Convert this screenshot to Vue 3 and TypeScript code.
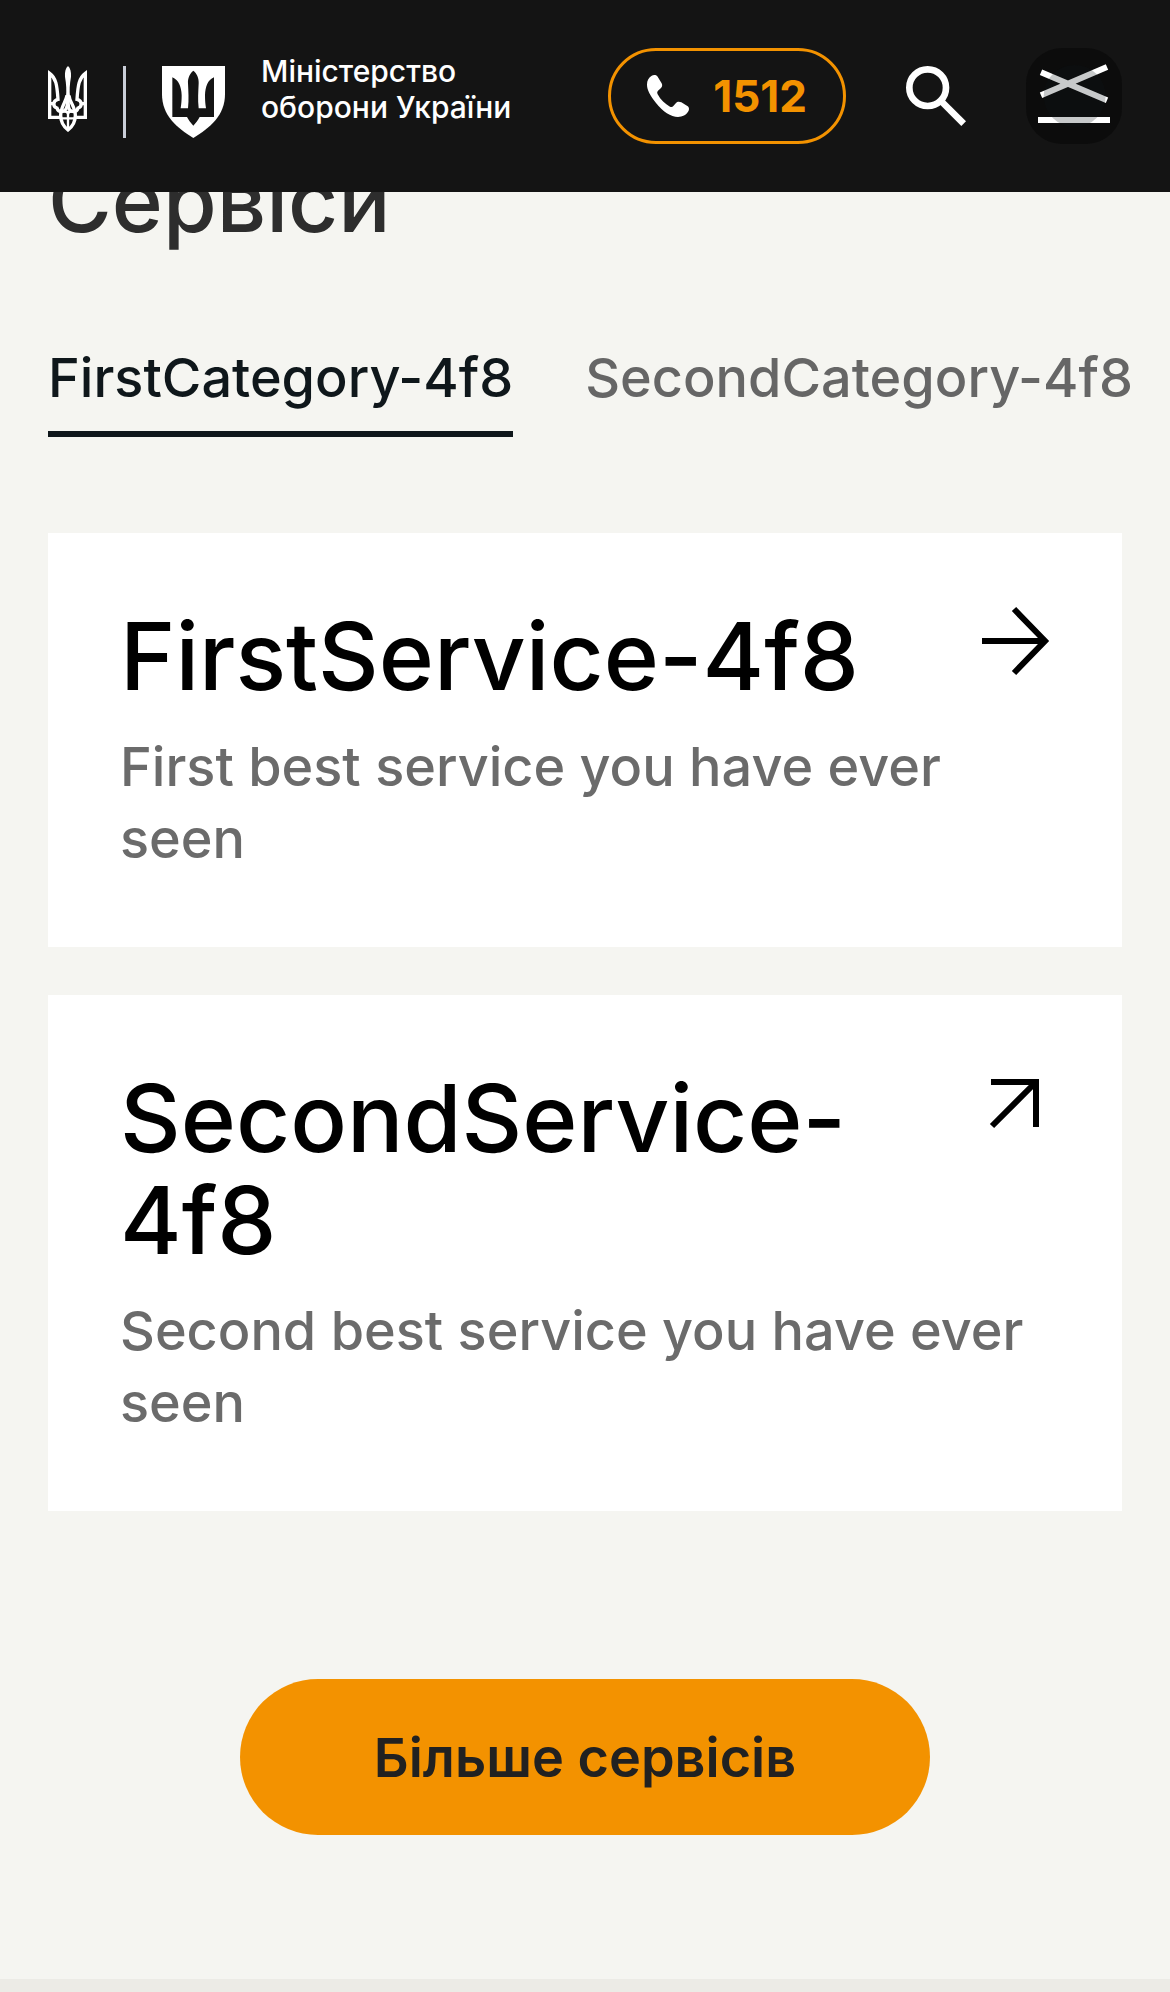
<script setup lang="ts">
import { ref } from 'vue'

interface Category {
  id: string
  name: string
}

interface Service {
  name: string
  description: string
  external: boolean
}

const categories: Category[] = [
  { id: 'first', name: 'FirstCategory-4f8' },
  { id: 'second', name: 'SecondCategory-4f8' },
]

const services: Service[] = [
  { name: 'FirstService-4f8', description: 'First best service you have ever seen', external: false },
  { name: 'SecondService-4f8', description: 'Second best service you have ever seen', external: true },
]

const active = ref<string>('first')
</script>

<template>
  <div class="page">
    <header class="header">
      <a class="brand" href="#">
        <svg class="trident" viewBox="0 0 117 198" fill="none" stroke="#fff" stroke-width="10" aria-hidden="true">
          <path d="M60 0C53 6 50 18 51 32C55 55 56 72 54 92H66C64 72 65 55 69 32C70 18 67 6 60 0Z" fill="#fff" stroke="none" />
          <path d="M38 154H5V22C24 36 27 56 30 100C14 103 14 122 27 126C30 138 40 138 50 134C58 128 60 112 60 88" />
          <path d="M79 154H112V22C93 36 90 56 87 100C103 103 103 122 90 126C87 138 77 138 67 134C59 128 60 112 60 88" />
          <path d="M4 113H18M113 113H99M57 88C54 108 38 122 38 148C38 172 48 183 60 192C72 183 82 172 82 148C82 122 64 108 63 88" />
          <path d="M60 134V190M38 157H82M46 136C54 136 60 140 60 146C60 140 66 136 74 136" stroke-width="7" />
        </svg>
        <span class="divider"></span>
        <svg class="shield" viewBox="0 0 189 216" aria-hidden="true">
          <path d="M0 0H189V85C189 148 144 186 94 216C44 186 0 148 0 85Z" fill="#fff" />
          <path d="M31 34C50 42 58 62 59 88C59 102 58 114 56 127H78C81 100 79 76 78 52C77 36 84 22 94 14C104 22 111 36 110 52C109 76 107 100 110 127H132C130 114 129 102 129 88C130 62 137 42 156 34V153H113C108 162 102 171 94 179C86 171 80 162 75 153H31Z" fill="#141414" />
        </svg>
        <span class="brand-name">Міністерство<br />оборони України</span>
      </a>
      <div class="actions">
        <a class="phone" href="tel:1512">
          <svg class="phone-icon" viewBox="0 0 126 126" aria-hidden="true">
            <path d="M13 3C19-1 27-1 31 4L43 23C47 29 46 35 42 39L33 47C30 50 30 54 32 58C41 75 54 87 69 95C73 97 77 96 79 93L87 84C91 79 97 79 103 82L121 93C127 97 127 103 124 109C118 120 106 126 93 126C72 126 47 110 27 84C9 61 0 44 0 29C0 17 5 8 13 3Z" fill="#fff" />
          </svg>
          <span>1512</span>
        </a>
        <button class="search" type="button" aria-label="Пошук">
          <svg viewBox="0 0 180 180" fill="none" stroke="#fff" aria-hidden="true">
            <circle cx="65" cy="65" r="55" stroke-width="20" />
            <path d="M105 105L173 173" stroke-width="20" />
          </svg>
        </button>
        <button class="menu" type="button" aria-label="Меню">
          <svg viewBox="0 0 288 288" aria-hidden="true">
            <path d="M45 73L243 157M45 142L243 57M36 216H252" fill="none" stroke="#fff" stroke-width="18" />
            <circle cx="146" cy="144" r="93" fill="#0f1419" fill-opacity="0.23" />
          </svg>
        </button>
      </div>
    </header>

    <main class="services">
      <h2 class="heading">Сервіси</h2>
      <nav class="tabs" aria-label="Категорії">
        <button
          v-for="category in categories"
          :key="category.id"
          type="button"
          class="tab"
          :class="{ 'tab-active': category.id === active }"
          @click="active = category.id"
        >
          {{ category.name }}
        </button>
      </nav>
      <div class="cards">
        <a v-for="service in services" :key="service.name" class="card" href="#">
          <div class="card-top">
            <h3 class="card-title">{{ service.name }}</h3>
            <svg class="arrow" viewBox="0 0 72 72" fill="none" stroke="#000" stroke-width="6" aria-hidden="true">
              <path v-if="service.external" d="M13 15H58V60M57 16L14 59" />
              <path v-else d="M4 36H66M36 4L67 36L36 68" />
            </svg>
          </div>
          <p class="card-text">{{ service.description }}</p>
        </a>
      </div>
      <button class="more" type="button">Більше сервісів</button>
    </main>
    <footer class="footer"></footer>
  </div>
</template>

<style>
body {
  background: #f5f5f1;
}
</style>

<style scoped>
.page {
  display: flex;
  flex-direction: column;
  min-height: 100vh;
  font-family: Inter, 'Noto Sans', sans-serif;
  background: #f5f5f1;
}

button {
  padding: 0;
  border: 0;
  background: none;
  font-family: inherit;
  cursor: pointer;
}

a {
  color: inherit;
  text-decoration: none;
}

svg {
  display: block;
  flex: none;
}

.header {
  position: sticky;
  top: 0;
  z-index: 1;
  display: flex;
  align-items: center;
  justify-content: space-between;
  box-sizing: border-box;
  height: 192px;
  padding: 0 48px;
  background: #141414;
}

.brand {
  display: flex;
  align-items: flex-start;
  gap: 36px;
  height: 72px;
  margin-top: 12px;
  color: #fff;
}

.trident {
  width: 39px;
  height: 66px;
}

.divider {
  width: 3px;
  height: 72px;
  background: #c9ced8;
}

.shield {
  width: 63px;
  height: 72px;
}

.brand-name {
  margin-top: -13px;
  font-size: 30px;
  font-weight: 500;
  line-height: 36px;
  white-space: nowrap;
}

.actions {
  display: flex;
  align-items: center;
  gap: 60px;
}

.phone {
  display: flex;
  align-items: center;
  gap: 24px;
  box-sizing: border-box;
  height: 96px;
  padding: 0 36px;
  border: 3px solid #f39200;
  border-radius: 48px;
  color: #f39200;
  font-size: 44px;
  font-weight: 700;
}

.phone-icon {
  width: 42px;
  height: 42px;
}

.search svg {
  width: 60px;
  height: 60px;
}

.menu {
  border-radius: 36px;
  background: #0c0c0c;
}

.menu svg {
  width: 96px;
  height: 96px;
}

.services {
  display: flex;
  flex-direction: column;
  align-items: stretch;
  padding: 0 48px 144px;
}

.heading {
  margin: -42px 0 0;
  color: #2d2d2d;
  font-size: 87px;
  font-weight: 500;
  line-height: 102px;
}

.tabs {
  display: flex;
  gap: 72px;
  margin-top: 90px;
}

.tab {
  flex: none;
  padding-bottom: 17px;
  border-bottom: 6px solid transparent;
  color: #666;
  font-size: 54px;
  font-weight: 500;
  line-height: 72px;
  white-space: nowrap;
}

.tab-active {
  border-color: #0f171b;
  color: #0f171b;
}

.cards {
  display: flex;
  flex-direction: column;
  gap: 48px;
  margin-top: 96px;
}

.card {
  padding: 72px;
  background: #fff;
}

.card-top {
  display: flex;
  align-items: flex-start;
  justify-content: space-between;
  gap: 72px;
}

.card-title {
  margin: 0;
  color: #000;
  font-size: 94px;
  font-weight: 500;
  line-height: 102px;
}

.arrow {
  width: 72px;
  height: 72px;
}

.card-text {
  margin: 24px 0 0;
  color: #6b6b6b;
  font-size: 54px;
  font-weight: 500;
  line-height: 72px;
}

.more {
  align-self: center;
  height: 156px;
  margin-top: 168px;
  padding: 0 134px;
  border-radius: 78px;
  background: #f39200;
  color: #212121;
  font-size: 54px;
  font-weight: 600;
}

.footer {
  flex: 1;
  background: #ecebe6;
}
</style>
